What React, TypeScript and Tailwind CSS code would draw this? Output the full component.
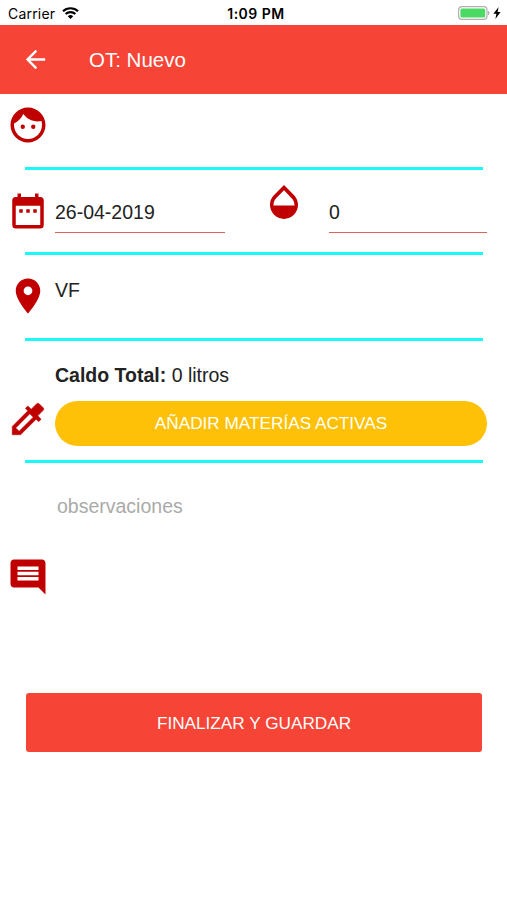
import { useState } from "react";
import {
  MdArrowBack,
  MdComment,
  MdFace,
  MdOpacity,
  MdPlace,
} from "react-icons/md";

const StatusBar = () => {
  return (
    <div className="grid h-[25px] grid-cols-3 items-center bg-white pt-px pr-[6px] pl-2 font-['Inter',sans-serif] text-black">
      <div className="flex items-center gap-[7px] text-[14px] tracking-[0.2px]">
        <span>Carrier</span>
        <svg viewBox="0 0 17 12" className="h-3 w-[17px]" fill="none">
          <path d="M1 4.3a10.8 10.8 0 0 1 15 0" stroke="#000" strokeWidth="2.1" />
          <path d="M3.6 7.1a7 7 0 0 1 9.8 0" stroke="#000" strokeWidth="2.1" />
          <path d="M8.5 12 5.8 9.3a3.9 3.9 0 0 1 5.4 0z" fill="#000" />
        </svg>
      </div>
      <span className="pl-[3px] text-center text-[14px] font-semibold tracking-[0.5px]">
        1:09 PM
      </span>
      <div className="flex items-center justify-end gap-[3px]">
        <svg viewBox="0 0 32 14" className="h-[14px] w-8">
          <rect x="0.6" y="0.6" width="28.4" height="12.8" rx="3.4" fill="#fff" stroke="#b0b0b0" strokeWidth="1.2" />
          <rect x="2.4" y="2.4" width="24.8" height="9.2" rx="1.6" fill="#4cd964" />
          <path d="M30 4.7c1.9.7 1.9 3.9 0 4.6z" fill="#b0b0b0" />
        </svg>
        <svg viewBox="0 0 8 12" className="h-3 w-2">
          <path d="M5.6 0 .4 6.8h3L2.4 12l5.2-7h-3z" fill="#000" />
        </svg>
      </div>
    </div>
  );
};

const CalendarIcon = () => (
  <svg viewBox="0 0 24 24" className="mt-5 size-[42px] shrink-0" fill="#c00000">
    <path d="M9 11H7v2h2zm4 0h-2v2h2zm4 0h-2v2h2zm2-7h-1V2h-2v2H8V2H6v2H5a2 2 0 0 0-2 2v14a2 2 0 0 0 2 2h14a2 2 0 0 0 2-2V6a2 2 0 0 0-2-2zm0 16H5V9h14z" />
  </svg>
);

const DropperIcon = () => (
  <svg
    viewBox="0 0 24 24"
    className="mt-[57px] size-[42px] shrink-0"
    fill="#c00000"
    stroke="#c00000"
    strokeWidth="0.3"
  >
    <path d="m20.71 5.63-2.34-2.34a1 1 0 0 0-1.41 0l-3.12 3.12-1.93-1.91-1.41 1.41 1.42 1.42L3 16.25V21h4.75l8.92-8.92 1.42 1.42 1.41-1.41-1.92-1.92 3.12-3.12a1 1 0 0 0 .01-1.42zM6.92 19 5 17.08l8.06-8.06 1.92 1.92z" />
  </svg>
);

const Divider = () => <hr className="mr-6 ml-[25px] h-[3px] border-0 bg-[#1af8f8]" />;

const NewOrder = () => {
  const [date, setDate] = useState<string>("26-04-2019");
  const [liters, setLiters] = useState<string>("0");
  const [notes, setNotes] = useState<string>("");

  return (
    <main className="min-h-[900px] w-full bg-white font-['Liberation_Sans',Arial,sans-serif] text-[19.5px] text-[#222]">
      <StatusBar />
      <header className="flex h-[69px] items-center bg-[#f64436] pl-[21px] text-white">
        <MdArrowBack className="size-[29px]" />
        <h1 className="ml-[39px] pt-[2px] text-[20.5px]">OT: Nuevo</h1>
      </header>

      <section className="flex h-[73px] pt-[10px] pl-[7px]">
        <MdFace className="size-[42px] text-[#c00000]" />
      </section>
      <Divider />

      <section className="flex h-[82px] pl-[7px]">
        <CalendarIcon />
        <input
          className="mt-[21px] ml-[6px] h-[42px] w-[170px] border-b border-[#e0605c] pt-[2px] outline-none"
          value={date}
          onChange={(e) => setDate(e.target.value)}
        />
        <MdOpacity className="mt-[11px] ml-[38px] size-[42px] shrink-0 text-[#c00000]" />
        <input
          className="mt-[21px] ml-6 h-[42px] w-[158px] border-b border-[#e0605c] pt-[2px] outline-none"
          value={liters}
          onChange={(e) => setLiters(e.target.value)}
        />
      </section>
      <Divider />

      <section className="flex h-[83px] pt-5 pl-[7px]">
        <MdPlace className="size-[42px] text-[#c00000]" />
        <span className="mt-px ml-[6px]">VF</span>
      </section>
      <Divider />

      <section className="flex h-[119px] pr-5 pl-[7px]">
        <DropperIcon />
        <div className="ml-[6px] grow pt-[19px]">
          <p className="leading-[30px]">
            <b>Caldo Total:</b> 0 litros
          </p>
          <button className="mt-[11px] h-[45px] w-full rounded-full bg-[#ffc107] pt-px text-[17.2px] text-white">
            AÑADIR MATERÍAS ACTIVAS
          </button>
        </div>
      </section>
      <Divider />

      <section className="flex h-[230px] pl-[7px]">
        <MdComment className="mt-[93px] size-[42px] shrink-0 text-[#c00000]" />
        <textarea
          className="mt-7 ml-2 h-[170px] w-[420px] resize-none leading-[30px] outline-none placeholder:text-[#aaa]"
          placeholder="observaciones"
          value={notes}
          onChange={(e) => setNotes(e.target.value)}
        />
      </section>

      <div className="pr-[25px] pl-[26px]">
        <button className="h-[59px] w-full rounded-[3px] bg-[#f64436] pt-[2px] text-[17.2px] text-white">
          FINALIZAR Y GUARDAR
        </button>
      </div>
    </main>
  );
};

export default NewOrder;
